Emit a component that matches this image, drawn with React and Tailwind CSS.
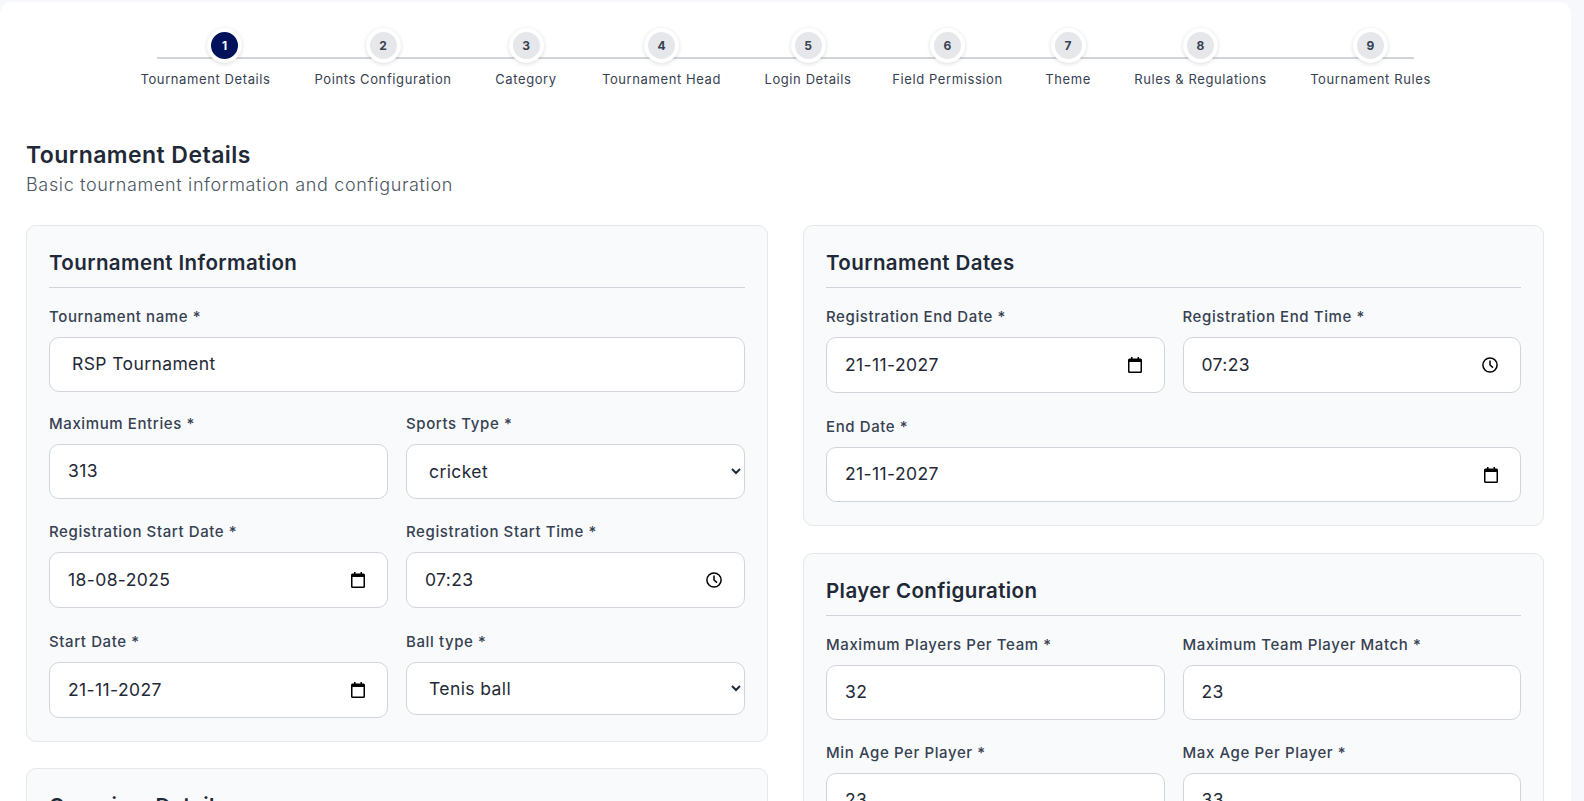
const font = "font-['Inter','Noto_Sans',sans-serif]";

const steps = [
  { n: 1, label: 'Tournament Details', width: 'w-[131px]', active: true },
  { n: 2, label: 'Points Configuration', width: 'w-[136px]' },
  { n: 3, label: 'Category', width: 'w-[62px]' },
  { n: 4, label: 'Tournament Head', width: 'w-[121px]' },
  { n: 5, label: 'Login Details', width: 'w-[84px]' },
  { n: 6, label: 'Field Permission', width: 'w-[107px]' },
  { n: 7, label: 'Theme', width: 'w-[46px]' },
  { n: 8, label: 'Rules & Regulations', width: 'w-[131px]' },
  { n: 9, label: 'Tournament Rules', width: 'w-[121px]' },
];

function CalendarIcon() {
  return (
    <svg width="14" height="16" viewBox="0 0 14 16" className="shrink-0">
      <path d="M3 0h1.5v1.5h5V0H11v1.5h1.5A1.5 1.5 0 0 1 14 3v11.5a1.5 1.5 0 0 1-1.5 1.5h-11A1.5 1.5 0 0 1 0 14.5V3a1.5 1.5 0 0 1 1.5-1.5H3V0z" fill="#000" />
      <rect x="1.5" y="5" width="11" height="9.5" fill="#fff" />
    </svg>
  );
}

function ClockIcon() {
  return (
    <svg width="16" height="16" viewBox="0 0 16 16" fill="none" stroke="#000" strokeWidth="1.5" className="shrink-0">
      <circle cx="8" cy="8" r="7.1" />
      <path d="M8 3.6V8l3 2.6" />
    </svg>
  );
}

function Label({ children }) {
  return <label className="mb-[10px] block h-[21px] text-[15px] leading-[21px] font-[450] tracking-[0.6px] text-[#374151]">{children}</label>;
}

function TextField({ label, value, height = 'h-[55px]', pad = 'pl-[18px]' }) {
  return (
    <div>
      <Label>{label}</Label>
      <input
        readOnly
        value={value}
        className={`${height} ${pad} block w-full rounded-[10px] border border-[#d1d5db] bg-white pr-4 pb-[2px] text-[17.5px] tracking-[0.4px] text-[#1f2937] outline-none`}
      />
    </div>
  );
}

function PickerField({ label, value, icon, height = 'h-[56px]', className = '' }) {
  return (
    <div className={className}>
      <Label>{label}</Label>
      <div className={`${height} flex items-center justify-between rounded-[10px] border border-[#d1d5db] bg-white pr-[22px] pl-[18px]`}>
        <input readOnly value={value} className="w-[160px] min-w-0 text-[17.5px] tracking-[0.4px] text-[#1f2937] outline-none" />
        {icon === 'clock' ? <ClockIcon /> : <CalendarIcon />}
      </div>
    </div>
  );
}

function SelectField({ label, value, height = 'h-[55px]', className = '' }) {
  return (
    <div className={className}>
      <Label>{label}</Label>
      <select
        defaultValue={value}
        className={`${height} block w-full rounded-[10px] border border-[#d1d5db] bg-white pl-[18px] text-[17.5px] tracking-[0.4px] text-[#1f2937] outline-none`}
      >
        <option>{value}</option>
      </select>
    </div>
  );
}

function Panel({ title, children }) {
  return (
    <section className="rounded-[10px] border border-[#e5e7eb] bg-[#f8fafc] px-[22px] pt-[22px] pb-[23px]">
      <h3 className="border-b border-[#d1d5db] pb-[9px] text-[20.5px] leading-[30px] font-semibold tracking-[0.4px] text-[#1f2937]">{title}</h3>
      {children}
    </section>
  );
}

function Stepper() {
  return (
    <div className="relative flex justify-center gap-[44px] pt-[26px]">
      <div className="absolute top-[55px] right-[157px] left-[157px] h-[2px] bg-[#d1d5db]" />
      {steps.map((step) => (
        <div key={step.n} className={`${step.width} relative flex shrink-0 flex-col items-center`}>
          <div
            className={`flex h-[35px] w-[35px] items-center justify-center rounded-full border-4 border-white text-[12px] font-bold shadow-[0_1px_4px_rgba(0,0,0,0.14)] ${
              step.active ? 'translate-x-[19px] bg-[#00125c] text-white' : 'bg-[#e5e7eb] text-[#374151]'
            }`}
          >
            {step.n}
          </div>
          <span className="mt-[6px] text-[13px] leading-[20px] tracking-[0.6px] whitespace-nowrap text-[#374151]">{step.label}</span>
        </div>
      ))}
    </div>
  );
}

export default function App() {
  return (
    <div className={`${font} h-screen overflow-hidden bg-[#f6f8fb] pt-[2px]`}>
      <div className="h-full w-[1571px] rounded-t-[12px] bg-white px-[26px]">
        <div className="-mx-[26px]">
          <Stepper />
        </div>

        <h2 className="mt-[50px] text-[23px] leading-[33px] font-semibold tracking-[0.45px] text-[#1f2937]">Tournament Details</h2>
        <p className="text-[18px] leading-[26px] font-light tracking-[0.65px] text-[#4b5563]">Basic tournament information and configuration</p>

        <div className="mt-[27px] grid grid-cols-[742px_741px] gap-x-[35px]">
          <div className="flex flex-col gap-[26px]">
            <Panel title="Tournament Information">
              <div className="mt-[18px] grid grid-cols-2 gap-x-[18px] gap-y-[22px]">
                <div className="col-span-2 -mb-[1px]">
                  <TextField label="Tournament name *" value="RSP Tournament" pad="pl-[22px]" />
                </div>
                <TextField label="Maximum Entries *" value="313" />
                <SelectField label="Sports Type *" value="cricket" />
                <PickerField label="Registration Start Date *" value="18-08-2025" />
                <PickerField label="Registration Start Time *" value="07:23" icon="clock" />
                <PickerField label="Start Date *" value="21-11-2027" className="mt-[1px]" />
                <SelectField label="Ball type *" value="Tenis ball" height="h-[53px]" className="mt-[1px]" />
              </div>
            </Panel>
            <Panel title="Organizer Details" />
          </div>

          <div className="flex flex-col gap-[27px]">
            <Panel title="Tournament Dates">
              <div className="mt-[18px] grid grid-cols-2 gap-x-[18px] gap-y-[23px]">
                <PickerField label="Registration End Date *" value="21-11-2027" />
                <PickerField label="Registration End Time *" value="07:23" icon="clock" />
                <PickerField label="End Date *" value="21-11-2027" height="h-[55px]" className="col-span-2" />
              </div>
            </Panel>
            <Panel title="Player Configuration">
              <div className="mt-[18px] grid grid-cols-2 gap-x-[18px] gap-y-[22px]">
                <TextField label="Maximum Players Per Team *" value="32" />
                <TextField label="Maximum Team Player Match *" value="23" />
                <TextField label="Min Age Per Player *" value="23" />
                <TextField label="Max Age Per Player *" value="33" />
              </div>
            </Panel>
          </div>
        </div>
      </div>
    </div>
  );
}
